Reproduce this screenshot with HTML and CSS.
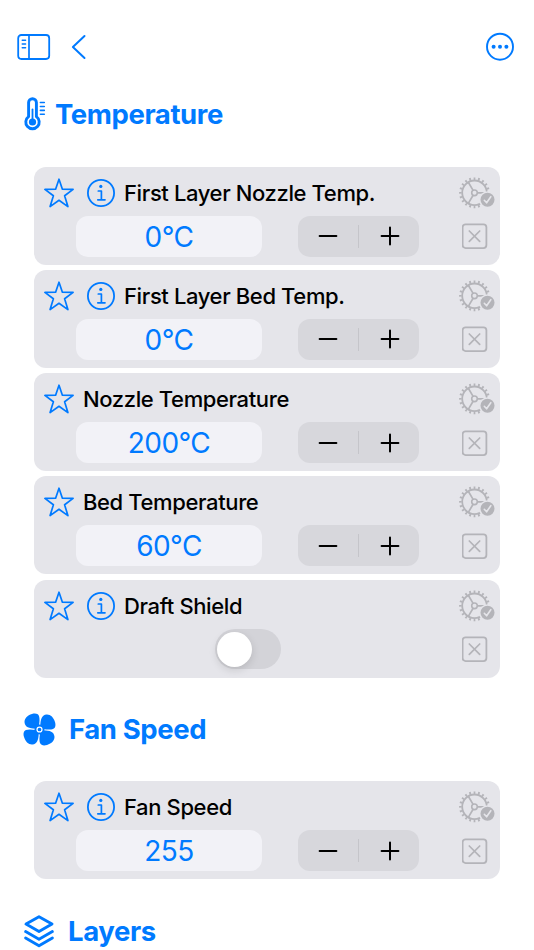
FILE: index.html
```
<!DOCTYPE html>
<html lang="en">
<head>
    <meta charset="UTF-8">
    <meta name="viewport" content="width=device-width, initial-scale=1.0">
    <title>Print Settings</title>
    <link rel="stylesheet" href="styles.css">
</head>
<body>

<svg class="sprite">
    <symbol id="star" viewBox="0 0 32 32">
        <path d="M16 2.2 L19.4 12.2 L30.1 12.4 L21.6 18.8 L24.9 29.6 L16 23.3 L7.1 29.6 L10.4 18.8 L1.9 12.4 L12.6 12.2 Z" fill="none" stroke="currentColor" stroke-width="1.7" stroke-linejoin="round"/>
    </symbol>
    <symbol id="info" viewBox="0 0 30 30">
        <circle cx="15" cy="15" r="13.1" fill="none" stroke="currentColor" stroke-width="1.8"/>
        <circle cx="14.8" cy="8.4" r="1.6" fill="currentColor"/>
        <path d="M12.3 13 H15.4 V21.6 M11.8 21.8 H19" fill="none" stroke="currentColor" stroke-width="1.7" stroke-linecap="round" stroke-linejoin="round"/>
    </symbol>
    <symbol id="gear" viewBox="0 0 38 34">
        <mask id="badge-gap">
            <rect width="38" height="34" fill="#fff"/>
            <circle cx="29.5" cy="23.8" r="8.6" fill="#000"/>
        </mask>
        <g mask="url(#badge-gap)" fill="none" stroke="currentColor">
            <circle cx="16.5" cy="16.8" r="12.3" stroke-width="1.8"/>
            <circle cx="16.5" cy="16.8" r="14.1" stroke-width="2.6" pathLength="60" stroke-dasharray="1.2 1.8" stroke-dashoffset=".6"/>
            <circle cx="16.5" cy="16.8" r="2.8" stroke-width="1.6"/>
            <path d="M19.3 16.8 H28 M15.1 14.4 L10.3 6.2 M15.1 19.2 L10.3 27.4" stroke-width="1.7"/>
        </g>
        <circle cx="29.5" cy="23.8" r="7" fill="currentColor"/>
        <path d="M26.3 24.3 L28.6 26.8 L32.8 20.7" fill="none" stroke="#e5e5ea" stroke-width="1.6" stroke-linecap="round" stroke-linejoin="round"/>
    </symbol>
    <symbol id="xbox" viewBox="0 0 26 26">
        <rect x=".6" y="1.3" width="23.8" height="23.8" rx="3" fill="none" stroke="currentColor" stroke-width="1.8"/>
        <path d="M7.3 8 L17.7 18.4 M17.7 8 L7.3 18.4" stroke="currentColor" stroke-width="1.7" stroke-linecap="round"/>
    </symbol>
    <symbol id="minus" viewBox="0 0 20 20">
        <path d="M1.6 10 H18.4" stroke="currentColor" stroke-width="2" stroke-linecap="round"/>
    </symbol>
    <symbol id="plus" viewBox="0 0 20 20">
        <path d="M1.6 10 H18.4 M10 1.6 V18.4" stroke="currentColor" stroke-width="2" stroke-linecap="round"/>
    </symbol>
</svg>

<header class="topbar">
    <svg class="icon-sidebar" viewBox="0 0 34 26" fill="none" stroke="currentColor">
        <rect x="1.2" y="1" width="31" height="24" rx="3.2" stroke-width="1.8"/>
        <path d="M12 1 V25" stroke-width="1.7"/>
        <path d="M5.2 6.3 H8.6 M5.2 10 H8.6 M5.2 13.7 H8.6" stroke-width="1.4" stroke-linecap="round"/>
    </svg>
    <svg class="icon-back" viewBox="0 0 16 26">
        <path d="M13.5 2 L1.9 13 L13.5 24" fill="none" stroke="currentColor" stroke-width="2" stroke-linecap="round" stroke-linejoin="round"/>
    </svg>
    <svg class="icon-more" viewBox="0 0 30 30">
        <circle cx="15" cy="14.7" r="13" fill="none" stroke="currentColor" stroke-width="1.9"/>
        <g fill="currentColor"><circle cx="8.6" cy="14.7" r="2"/><circle cx="15" cy="14.7" r="2"/><circle cx="21.4" cy="14.7" r="2"/></g>
    </svg>
</header>

<main>
    <h2 class="section-title">
        <svg class="icon-thermo" viewBox="0 0 24 36" fill="none" stroke="currentColor">
            <path d="M5.6 20.6 V6.6 a3.9 3.9 0 0 1 7.8 0 V20.6 a6.7 6.7 0 1 1 -7.8 0 Z" stroke-width="2.9" stroke-linejoin="round"/>
            <path d="M9.5 13.5 V25" stroke-width="1.8" stroke-linecap="round"/>
            <circle cx="9.5" cy="26" r="3.6" fill="currentColor" stroke="none"/>
            <path d="M17.4 6.5 H21.3 M17.4 10.5 H21.3 M17.4 14.4 H21.3 M17.4 18.3 H21.3" stroke-width="1.6" stroke-linecap="round"/>
        </svg>
        <span class="title-temperature">Temperature</span>
    </h2>

    <div class="list">
        <div class="card">
            <div class="card-head">
                <svg class="star"><use href="#star"/></svg>
                <svg class="info"><use href="#info"/></svg>
                <span class="label">First Layer Nozzle Temp.</span>
                <svg class="gear"><use href="#gear"/></svg>
            </div>
            <div class="card-body">
                <div class="value">0°C</div>
                <div class="stepper"><svg><use href="#minus"/></svg><i></i><svg><use href="#plus"/></svg></div>
                <svg class="xbox"><use href="#xbox"/></svg>
            </div>
        </div>
        <div class="card">
            <div class="card-head">
                <svg class="star"><use href="#star"/></svg>
                <svg class="info"><use href="#info"/></svg>
                <span class="label">First Layer Bed Temp.</span>
                <svg class="gear"><use href="#gear"/></svg>
            </div>
            <div class="card-body">
                <div class="value">0°C</div>
                <div class="stepper"><svg><use href="#minus"/></svg><i></i><svg><use href="#plus"/></svg></div>
                <svg class="xbox"><use href="#xbox"/></svg>
            </div>
        </div>
        <div class="card">
            <div class="card-head">
                <svg class="star"><use href="#star"/></svg>
                <span class="label">Nozzle Temperature</span>
                <svg class="gear"><use href="#gear"/></svg>
            </div>
            <div class="card-body">
                <div class="value">200°C</div>
                <div class="stepper"><svg><use href="#minus"/></svg><i></i><svg><use href="#plus"/></svg></div>
                <svg class="xbox"><use href="#xbox"/></svg>
            </div>
        </div>
        <div class="card">
            <div class="card-head">
                <svg class="star"><use href="#star"/></svg>
                <span class="label">Bed Temperature</span>
                <svg class="gear"><use href="#gear"/></svg>
            </div>
            <div class="card-body">
                <div class="value">60°C</div>
                <div class="stepper"><svg><use href="#minus"/></svg><i></i><svg><use href="#plus"/></svg></div>
                <svg class="xbox"><use href="#xbox"/></svg>
            </div>
        </div>
        <div class="card">
            <div class="card-head">
                <svg class="star"><use href="#star"/></svg>
                <svg class="info"><use href="#info"/></svg>
                <span class="label">Draft Shield</span>
                <svg class="gear"><use href="#gear"/></svg>
            </div>
            <div class="card-body">
                <div class="toggle"><div class="knob"></div></div>
                <svg class="xbox"><use href="#xbox"/></svg>
            </div>
        </div>
    </div>

    <h2 class="section-title">
        <svg class="icon-fan" viewBox="0 0 32 32">
            <g fill="currentColor">
                <path id="blade" d="M15.4 12.4 C16.2 8.6 16.3 5 15.5 2.9 C14.5 .4 11.6 .1 8.7 1 C4.2 2.3 1.2 5.4 1.5 9.2 C1.9 13.6 6 15 12 15.2 Z"/>
                <use href="#blade" transform="rotate(90 16 16)"/>
                <use href="#blade" transform="rotate(180 16 16)"/>
                <use href="#blade" transform="rotate(270 16 16)"/>
                <circle cx="16" cy="16" r="4.8"/>
            </g>
            <circle cx="16" cy="16" r="2.4" fill="none" stroke="#fff" stroke-width="1.2"/>
        </svg>
        <span class="title-fan">Fan Speed</span>
    </h2>

    <div class="list">
        <div class="card">
            <div class="card-head">
                <svg class="star"><use href="#star"/></svg>
                <svg class="info"><use href="#info"/></svg>
                <span class="label">Fan Speed</span>
                <svg class="gear"><use href="#gear"/></svg>
            </div>
            <div class="card-body">
                <div class="value">255</div>
                <div class="stepper"><svg><use href="#minus"/></svg><i></i><svg><use href="#plus"/></svg></div>
                <svg class="xbox"><use href="#xbox"/></svg>
            </div>
        </div>
    </div>

    <h2 class="section-title">
        <svg class="icon-layers" viewBox="0 0 32 34" fill="none" stroke="currentColor" stroke-width="2.9" stroke-linejoin="round" stroke-linecap="round">
            <path d="M16 2.8 L29 10.1 L16 17.5 L3 10.1 Z"/>
            <path d="M2.6 17.6 L16 25.2 L29.4 17.6"/>
            <path d="M2.6 24 L16 31.8 L29.4 24"/>
        </svg>
        <span class="title-layers">Layers</span>
    </h2>
</main>

</body>
</html>
```
FILE: styles.css
```
body {
    margin: 0;
    height: 950px;
    overflow: hidden;
    background-color: #fff;
    color: #000;
    font-family: Inter, "Liberation Sans", sans-serif;
}
svg {
    display: block;
    flex: none;
}
.sprite {
    position: absolute;
    width: 0;
    height: 0;
}
.topbar {
    display: flex;
    align-items: center;
    height: 93.4px;
    padding: 0 19px 0 17px;
    box-sizing: border-box;
    color: #007aff;
}
.icon-sidebar {
    width: 34px;
    height: 26px;
}
.icon-back {
    width: 16px;
    height: 26px;
    margin-left: 20px;
}
.icon-more {
    width: 30px;
    height: 30px;
    margin-left: auto;
}
.section-title {
    display: flex;
    align-items: center;
    height: 42px;
    margin: 0;
    padding-left: 23px;
    color: #007aff;
    font-size: 27.5px;
    font-weight: 700;
    letter-spacing: -0.4px;
    white-space: nowrap;
}
.icon-thermo {
    width: 24px;
    height: 36px;
    margin-right: 8px;
}
.icon-fan {
    width: 33px;
    height: 33px;
    margin-right: 13px;
}
.icon-layers {
    width: 32px;
    height: 34px;
    margin-right: 13px;
}
.list {
    display: flex;
    flex-direction: column;
    gap: 5.2px;
    padding: 31.4px 34px 30.5px;
}
.card {
    height: 98px;
    border-radius: 12px;
    background-color: #e5e5ea;
}
.card-head {
    display: flex;
    align-items: center;
    height: 49px;
    padding: 3px 4px 0 9px;
    box-sizing: border-box;
}
.star {
    width: 32px;
    height: 32px;
    color: #007aff;
}
.info {
    width: 30px;
    height: 30px;
    margin-left: 11px;
    color: #007aff;
}
.label {
    margin-left: 8px;
    font-size: 22px;
    font-weight: 500;
    letter-spacing: -0.38px;
    white-space: nowrap;
}
.gear {
    width: 38px;
    height: 34px;
    margin-left: auto;
    color: #b4b4b9;
}
.card-body {
    display: flex;
    align-items: center;
    height: 41px;
    padding: 0 12.5px 0 42px;
}
.value {
    width: 186px;
    height: 41px;
    border-radius: 12px;
    background-color: #f2f2f7;
    color: #007aff;
    font-size: 28px;
    line-height: 42px;
    letter-spacing: -0.6px;
    text-align: center;
}
.stepper {
    display: flex;
    align-items: center;
    justify-content: center;
    gap: 20.3px;
    width: 121px;
    height: 41px;
    margin-left: 36.4px;
    border-radius: 12px;
    background-color: #d7d7dc;
}
.stepper svg {
    width: 20px;
    height: 20px;
}
.stepper i {
    width: 1px;
    height: 23px;
    background-color: #c5c5ca;
}
.xbox {
    width: 26px;
    height: 26px;
    margin-left: auto;
    color: #b4b4b9;
}
.toggle {
    width: 66px;
    height: 40px;
    margin-left: 139px;
    padding: 2.5px 2px;
    box-sizing: border-box;
    border-radius: 20px;
    background-color: #d3d3d8;
}
.knob {
    width: 35px;
    height: 35px;
    border-radius: 50%;
    background-color: #fff;
    box-shadow: 0 3px 8px rgba(0, 0, 0, 0.13);
}
```
